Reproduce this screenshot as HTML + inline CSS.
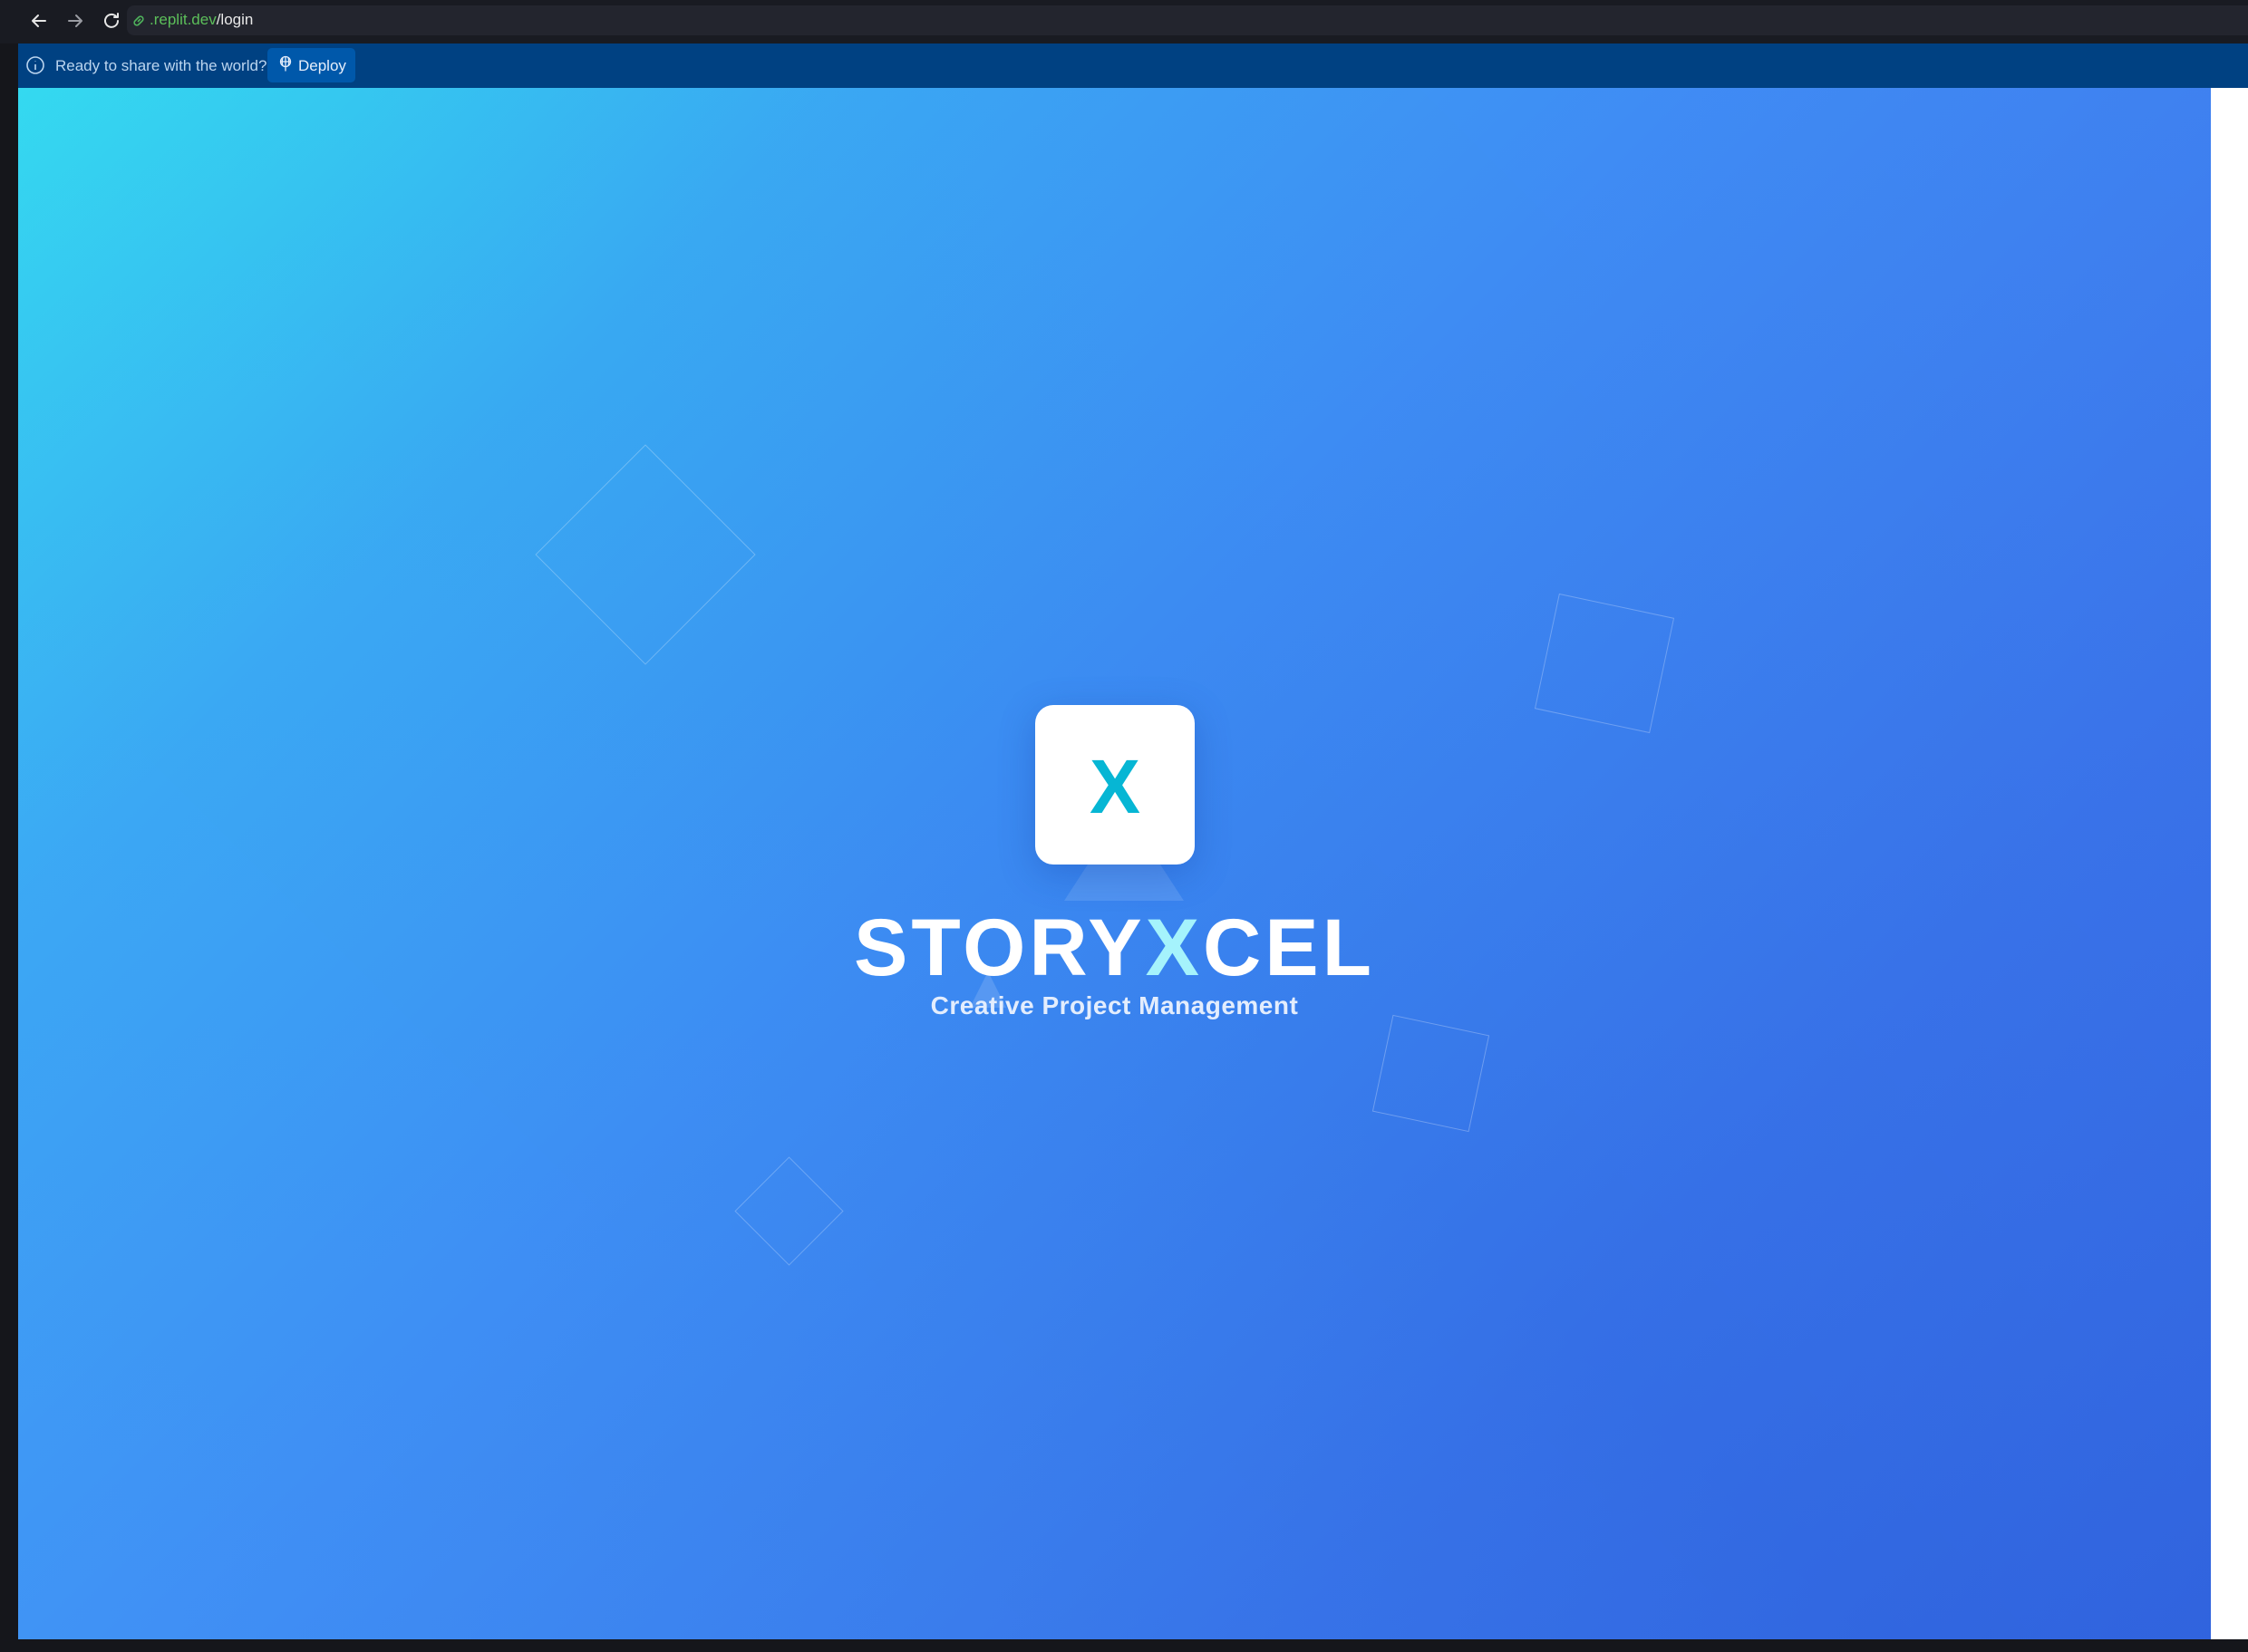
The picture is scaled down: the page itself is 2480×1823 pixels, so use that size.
<!DOCTYPE html>
<html><head><meta charset="utf-8"><style>
*{margin:0;padding:0;box-sizing:border-box}
body{width:2480px;height:1823px;background:#15161b;position:relative;overflow:hidden;font-family:"Liberation Sans",sans-serif}
.top{position:absolute;left:0;top:0;width:2480px;height:48px;background:#191b22}
.url{position:absolute;left:140px;top:6px;width:2340px;height:33px;background:#23252e;border-radius:8px 0 0 8px}
.urltxt{position:absolute;left:165px;top:12px;font-size:17px;color:#e8e8e8}
.banner{position:absolute;left:20px;top:48px;width:2460px;height:49px;background:#004182}
.btxt{position:absolute;left:61px;top:63px;font-size:17px;color:#bcd5ef}
.dep{position:absolute;left:295px;top:53px;width:97px;height:38px;background:#0058aa;border-radius:5px}
.deptxt{position:absolute;left:329px;top:63px;font-size:17px;color:#e6eefb}
.main{position:absolute;left:20px;top:97px;width:2419px;height:1712px;overflow:hidden;
background:linear-gradient(135deg,#33dcef 0%,#38a9f2 22%,#3b8bf2 45%,#356fe6 75%,#2f62dd 100%)}
.main:after{content:"";position:absolute;inset:0;background:linear-gradient(45deg,rgba(80,160,255,0.25),rgba(0,0,0,0) 50%,rgba(90,140,255,0.2))}
.white{position:absolute;left:2439px;top:97px;width:41px;height:1712px;background:#fff}
.shape{position:absolute;border:1.5px solid rgba(255,255,255,0.28)}
.box{position:absolute;left:1122px;top:681px;width:176px;height:176px;background:#fff;border-radius:20px;box-shadow:0 10px 40px rgba(20,60,160,0.3);z-index:2}
.box span{position:absolute;left:0;right:0;top:42px;text-align:center;font-weight:bold;font-size:84px;color:#06b6d4}
.title{position:absolute;left:0;width:2419px;top:897px;text-align:center;font-weight:900;font-size:89px;color:#fff;letter-spacing:4px;z-index:2}
.title b{color:#a5f3fc}
.sub{position:absolute;left:0;width:2419px;top:997px;text-align:center;font-size:28px;font-weight:600;color:#e3edfd;letter-spacing:0.5px;z-index:2}
</style></head><body>
<div class="top"></div>
<div class="url"></div>
<svg style="position:absolute;left:30px;top:10px" width="110" height="26" viewBox="0 0 110 26" fill="none" stroke="#e6e6e6" stroke-width="2" stroke-linecap="round" stroke-linejoin="round">
<path d="M20 13H6M12 7L6 13l6 6"/>
<path d="M60 13H46M54 7l6 6-6 6" stroke="#9a9ca3"/>
<path d="M98 8a7 7 0 1 0 2 5M100 5v4h-4"/>
</svg>
<svg style="position:absolute;left:145px;top:15px" width="16" height="16" viewBox="0 0 16 16" fill="none" stroke="#4fb35c" stroke-width="1.6"><path d="M7 9l3-3M6 6L4 8a2.5 2.5 0 0 0 4 4l2-2M10 10l2-2a2.5 2.5 0 0 0-4-4L6 6"/></svg>
<div class="urltxt"><span style="color:#5cbf5a">.replit.dev</span>/login</div>
<div class="banner"></div>
<svg style="position:absolute;left:28px;top:61px" width="22" height="22" viewBox="0 0 22 22" fill="none" stroke="#bcd5ef" stroke-width="1.6"><circle cx="11" cy="11" r="9"/><path d="M11 10v6M11 6.5v.5"/></svg>
<div class="btxt">Ready to share with the world?</div>
<div class="dep"></div>
<svg style="position:absolute;left:307px;top:61px" width="16" height="20" viewBox="0 0 16 20" fill="none" stroke="#e6eefb" stroke-width="1.3"><circle cx="8" cy="7" r="5.5"/><path d="M2.5 7h11M8 1.5v16M5 3c-1 3-1 6 0 8M11 3c1 3 1 6 0 8"/></svg>
<div class="deptxt">Deploy</div>
<div class="main">
<div class="shape" style="left:606px;top:429px;width:172px;height:172px;transform:rotate(45deg)"></div>
<div class="shape" style="left:1685px;top:570px;width:130px;height:130px;transform:rotate(12deg)"></div>
<div class="shape" style="left:1504px;top:1033px;width:109px;height:109px;transform:rotate(12deg)"></div>
<div class="shape" style="left:808px;top:1197px;width:85px;height:85px;transform:rotate(45deg)"></div>
<svg style="position:absolute;left:1150px;top:857px" width="140" height="40"><polygon points="30,0 110,0 136,40 4,40" fill="rgba(255,255,255,0.12)"/></svg>
<svg style="position:absolute;left:1030px;top:975px" width="80" height="40"><polygon points="40,0 60,40 20,40" fill="rgba(255,255,255,0.15)"/></svg>
<div class="box"><span>X</span></div>
<div class="title">STORY<b>X</b>CEL</div>
<div class="sub">Creative Project Management</div>
</div>
<div class="white"></div>
</body></html>
